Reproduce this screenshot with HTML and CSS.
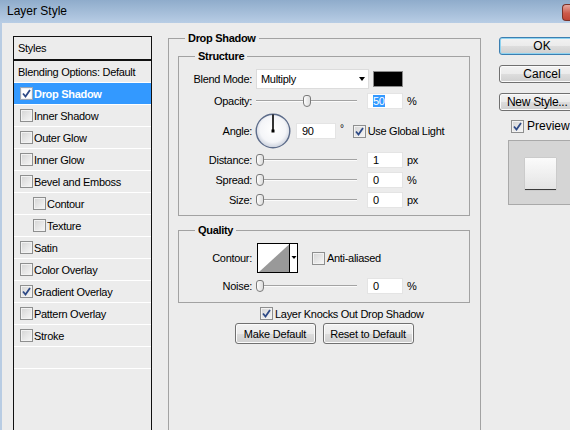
FILE: index.html
```html
<!DOCTYPE html>
<html>
<head>
<meta charset="utf-8">
<title>Layer Style</title>
<link rel="stylesheet" href="styles.css">
</head>
<body>
<div class="titlebar">
  <span class="title">Layer Style</span>
  <span class="close"></span>
</div>
<div class="window">
  <aside class="styles-panel">
    <div class="panel-head">Styles</div>
    <ul class="style-list">
      <li class="plain">Blending Options: Default</li>
      <li class="sel"><span class="cb"><svg viewBox="0 0 11 11" width="11" height="11"><path d="M2 5.5l2.5 3 4.5-6.5" fill="none" stroke="#2e4a86" stroke-width="1.8"/></svg></span>Drop Shadow</li>
      <li><span class="cb"></span>Inner Shadow</li>
      <li><span class="cb"></span>Outer Glow</li>
      <li><span class="cb"></span>Inner Glow</li>
      <li><span class="cb"></span>Bevel and Emboss</li>
      <li class="sub"><span class="cb"></span>Contour</li>
      <li class="sub"><span class="cb"></span>Texture</li>
      <li><span class="cb"></span>Satin</li>
      <li><span class="cb"></span>Color Overlay</li>
      <li><span class="cb"><svg viewBox="0 0 11 11" width="11" height="11"><path d="M2 5.5l2.5 3 4.5-6.5" fill="none" stroke="#2e4a86" stroke-width="1.8"/></svg></span>Gradient Overlay</li>
      <li><span class="cb"></span>Pattern Overlay</li>
      <li><span class="cb"></span>Stroke</li>
      <li class="plain"></li>
    </ul>
  </aside>

  <main class="settings">
    <fieldset class="group outer">
      <legend>Drop Shadow</legend>

      <fieldset class="group inner structure">
        <legend>Structure</legend>
        <div class="row h22">
          <span class="label">Blend Mode:</span>
          <span class="select">Multiply<span class="arrow"></span></span>
          <span class="color-swatch"></span>
        </div>
        <div class="row h22">
          <span class="label">Opacity:</span>
          <span class="slider" style="--v:50"><span class="track"></span><span class="thumb"></span></span>
          <span class="num"><span class="hl">50</span></span>
          <span class="unit">%</span>
        </div>
        <div class="row h38">
          <span class="label">Angle:</span>
          <svg class="dial" viewBox="0 0 36 36" width="36" height="36">
            <defs>
              <radialGradient id="dg" cx="50%" cy="45%" r="55%">
                <stop offset="0" stop-color="#ffffff"/>
                <stop offset="0.7" stop-color="#f4f5f8"/>
                <stop offset="1" stop-color="#c9cfdb"/>
              </radialGradient>
            </defs>
            <circle cx="18" cy="18" r="16.8" fill="url(#dg)" stroke="#5d6c8a" stroke-width="1.4"/>
            <line x1="18" y1="18" x2="18" y2="1.5" stroke="#000" stroke-width="1.6"/>
            <rect x="16.5" y="16.5" width="3" height="3" fill="#000"/>
          </svg>
          <span class="num angle">90</span>
          <span class="deg">°</span>
          <span class="cb gl"><svg viewBox="0 0 11 11" width="11" height="11"><path d="M2 5.5l2.5 3 4.5-6.5" fill="none" stroke="#2e4a86" stroke-width="1.8"/></svg></span>
          <span class="cb-text">Use Global Light</span>
        </div>
        <div class="row">
          <span class="label">Distance:</span>
          <span class="slider" style="--v:0"><span class="track"></span><span class="thumb"></span></span>
          <span class="num">1</span>
          <span class="unit">px</span>
        </div>
        <div class="row">
          <span class="label">Spread:</span>
          <span class="slider" style="--v:0"><span class="track"></span><span class="thumb"></span></span>
          <span class="num">0</span>
          <span class="unit">%</span>
        </div>
        <div class="row">
          <span class="label">Size:</span>
          <span class="slider" style="--v:0"><span class="track"></span><span class="thumb"></span></span>
          <span class="num">0</span>
          <span class="unit">px</span>
        </div>
      </fieldset>

      <fieldset class="group inner quality">
        <legend>Quality</legend>
        <div class="row h32">
          <span class="label">Contour:</span>
          <svg class="contour" viewBox="0 0 41 30" width="41" height="30">
            <rect x="0.5" y="0.5" width="40" height="29" fill="#fff" stroke="#000"/>
            <polygon points="2,29 32,1.5 32,29" fill="#999"/>
            <line x1="32.5" y1="1" x2="32.5" y2="29" stroke="#000"/>
            <polygon points="34.5,13 39.5,13 37,16" fill="#000"/>
          </svg>
          <span class="cb aa"></span>
          <span class="cb-text">Anti-aliased</span>
        </div>
        <div class="row noise">
          <span class="label">Noise:</span>
          <span class="slider" style="--v:0"><span class="track"></span><span class="thumb"></span></span>
          <span class="num">0</span>
          <span class="unit">%</span>
        </div>
      </fieldset>

      <div class="knock">
        <span class="cb"><svg viewBox="0 0 11 11" width="11" height="11"><path d="M2 5.5l2.5 3 4.5-6.5" fill="none" stroke="#2e4a86" stroke-width="1.8"/></svg></span>
        <span class="cb-text">Layer Knocks Out Drop Shadow</span>
      </div>
      <div class="defaults">
        <button class="btn make">Make Default</button>
        <button class="btn reset">Reset to Default</button>
      </div>
    </fieldset>
  </main>

  <div class="actions">
    <button class="btn big ok">OK</button>
    <button class="btn big">Cancel</button>
    <button class="btn big newstyle">New Style...</button>
    <div class="preview-check">
      <span class="cb"><svg viewBox="0 0 11 11" width="11" height="11"><path d="M2 5.5l2.5 3 4.5-6.5" fill="none" stroke="#2e4a86" stroke-width="1.8"/></svg></span>
      <span>Preview</span>
    </div>
    <div class="preview-box">
      <div class="preview-swatch"></div>
    </div>
  </div>
</div>
</body>
</html>
```

FILE: styles.css
```css
* { box-sizing: border-box; }
html, body { margin: 0; padding: 0; }
body {
  width: 570px;
  height: 430px;
  overflow: hidden;
  background: #ececec;
  font-family: "Liberation Sans", Arial, sans-serif;
  font-size: 11px;
  letter-spacing: -0.3px;
  color: #000;
}

.titlebar {
  height: 23px;
  display: flex;
  align-items: flex-start;
  justify-content: space-between;
  background: linear-gradient(#8faccb, #b8cde5);
  padding-left: 7px;
  overflow: hidden;
}
.title {
  font-size: 12px;
  letter-spacing: 0;
  line-height: 23px;
}
.close {
  flex: none;
  width: 8px;
  height: 17px;
  margin-top: 4px;
  border: 1px solid #7b3229;
  border-right: none;
  border-radius: 4px 0 0 4px;
  background: linear-gradient(#e6a89f, #cc5a4b 55%, #c04434);
}

.window {
  display: flex;
  height: 407px;
  border-left: 2px solid #b8cce3;
  overflow: hidden;
}

/* styles list */
.styles-panel {
  flex: none;
  width: 139px;
  height: 430px;
  margin: 13px 0 0 11px;
  border: 1px solid #111;
}
.panel-head {
  height: 24px;
  border-bottom: 2px solid #111;
  padding-left: 4px;
  display: flex;
  align-items: center;
}
.style-list {
  list-style: none;
  margin: 0;
  padding: 0;
}
.style-list li {
  height: 22px;
  border-bottom: 1px solid #fff;
  display: flex;
  align-items: center;
  gap: 1px;
  padding-left: 6px;
  white-space: nowrap;
}
.style-list li.plain { padding-left: 4px; }
.style-list li.sub { padding-left: 19px; }
.style-list li.sel {
  background: #3399ff;
  color: #fff;
  font-weight: bold;
}
.style-list li.sel .cb { background: #fff; border-color: #9aa7b8; }

/* checkbox */
.cb {
  flex: none;
  width: 13px;
  height: 13px;
  border: 1px solid #8e8f8f;
  background: linear-gradient(135deg, #d4d4d4, #f7f7f7);
  box-shadow: inset 0 0 0 1px #f2f2f2;
  display: inline-flex;
  align-items: center;
  justify-content: center;
}
.cb svg { display: block; }
.cb-text { margin-left: 2px; white-space: nowrap; }

/* settings */
.settings {
  flex: none;
  width: 313px;
  margin: 9px 0 0 16px;
}
fieldset.group {
  margin: 0;
  min-width: 0;
  border: 1px solid #a2a2a2;
}
fieldset.group legend {
  font-weight: bold;
  line-height: 12px;
  padding: 0 3px;
}
fieldset.outer {
  height: 420px;
  padding: 6px 10px 0 9px;
}
fieldset.outer > legend { margin-left: 7px; }
fieldset.inner { padding: 6px 0 5px 0; }
fieldset.inner > legend { margin-left: 16px; }
fieldset.quality { margin-top: 8px; padding-bottom: 6px; }

.row {
  display: flex;
  align-items: center;
  height: 20px;
  white-space: nowrap;
}
.row.h22 { height: 22px; }
.row.h38 { height: 38px; }
.row.h32 { height: 32px; }
.row.noise { margin-top: 2px; }
.label {
  flex: none;
  width: 73px;
  text-align: right;
  margin-right: 4px;
}

.select {
  width: 113px;
  height: 20px;
  background: #fff;
  border: 1px solid #dcdcdc;
  display: flex;
  align-items: center;
  padding-left: 4px;
}
.arrow {
  margin-left: auto;
  margin-right: 3px;
  width: 0;
  height: 0;
  border-left: 3.5px solid transparent;
  border-right: 3.5px solid transparent;
  border-top: 4px solid #000;
}
.color-swatch {
  width: 30px;
  height: 16px;
  margin-left: 4px;
  background: #000;
  border: 1px solid #8a8a8a;
}

.slider {
  position: relative;
  flex: none;
  width: 101px;
  height: 14px;
  display: flex;
  align-items: center;
}
.track {
  display: block;
  width: 100%;
  height: 2px;
  border-top: 1px solid #a3a3a3;
  border-bottom: 1px solid #fbfbfb;
}
.thumb {
  position: absolute;
  top: 1px;
  left: calc((100% - 8px) * var(--v) / 100);
  width: 8px;
  height: 12px;
  border: 1px solid #7a7a7a;
  border-radius: 3px 3px 4px 4px;
  background: linear-gradient(90deg, #fdfdfd, #dcdcdc);
}

.num {
  flex: none;
  width: 36px;
  height: 16px;
  margin-left: 10px;
  background: #fff;
  border: 1px solid #e4e4e4;
  padding-left: 5px;
  line-height: 14px;
}
.hl { background: #3399ff; color: #fff; }
.unit { margin-left: 4px; }

.dial { flex: none; display: block; margin-left: -1px; }
.num.angle { width: 40px; margin-left: 5px; }
.deg { margin-left: 4px; font-size: 10px; margin-top: -6px; }
.cb.gl { margin-left: 9px; }

.contour { display: block; flex: none; margin-left: 1px; }
.cb.aa { margin-left: 14px; }

.knock {
  display: flex;
  align-items: center;
  height: 19px;
  margin-top: 1px;
  padding-left: 82px;
}

.defaults {
  display: flex;
  justify-content: center;
  gap: 7px;
}

.btn {
  font-family: "Liberation Sans", Arial, sans-serif;
  font-size: 11px;
  letter-spacing: -0.2px;
  color: #000;
  height: 21px;
  padding: 0;
  border: 1px solid #707070;
  border-radius: 3px;
  background: linear-gradient(#f2f2f2 0%, #ebebeb 50%, #dddddd 51%, #cfcfcf 100%);
  box-shadow: inset 0 0 0 1px #fbfbfb;
}
.btn.make { width: 81px; }
.btn.reset { width: 91px; }

/* right column */
.actions {
  flex: none;
  width: 71px;
  margin: 14px 0 0 18px;
  display: flex;
  flex-direction: column;
  gap: 10px;
}
.btn.big {
  width: 86px;
  height: 18px;
  font-size: 12px;
  letter-spacing: 0;
  line-height: 14px;
}
.btn.newstyle {
  text-align: left;
  padding-left: 7px;
  letter-spacing: -0.3px;
}
.btn.ok {
  border-color: #3c7fb1;
  box-shadow: inset 0 0 0 1px #8fd3f0;
}
.preview-check {
  display: flex;
  align-items: center;
  gap: 3px;
  height: 18px;
  margin-top: -4px;
  padding-left: 12px;
  font-size: 12px;
  letter-spacing: 0;
}
.preview-box {
  width: 62px;
  height: 65px;
  margin: -5px 0 0 9px;
  background: #d5d5d5;
  border: 1px solid #a9a9a9;
  border-right: none;
  padding: 17px 0 0 16px;
}
.preview-swatch {
  width: 31px;
  height: 32px;
  background: linear-gradient(#fbfbfb, #e4e4e4);
  border-bottom: 1px solid #3c3c3c;
  box-shadow: 0 0 1px rgba(0,0,0,0.25);
}
```
